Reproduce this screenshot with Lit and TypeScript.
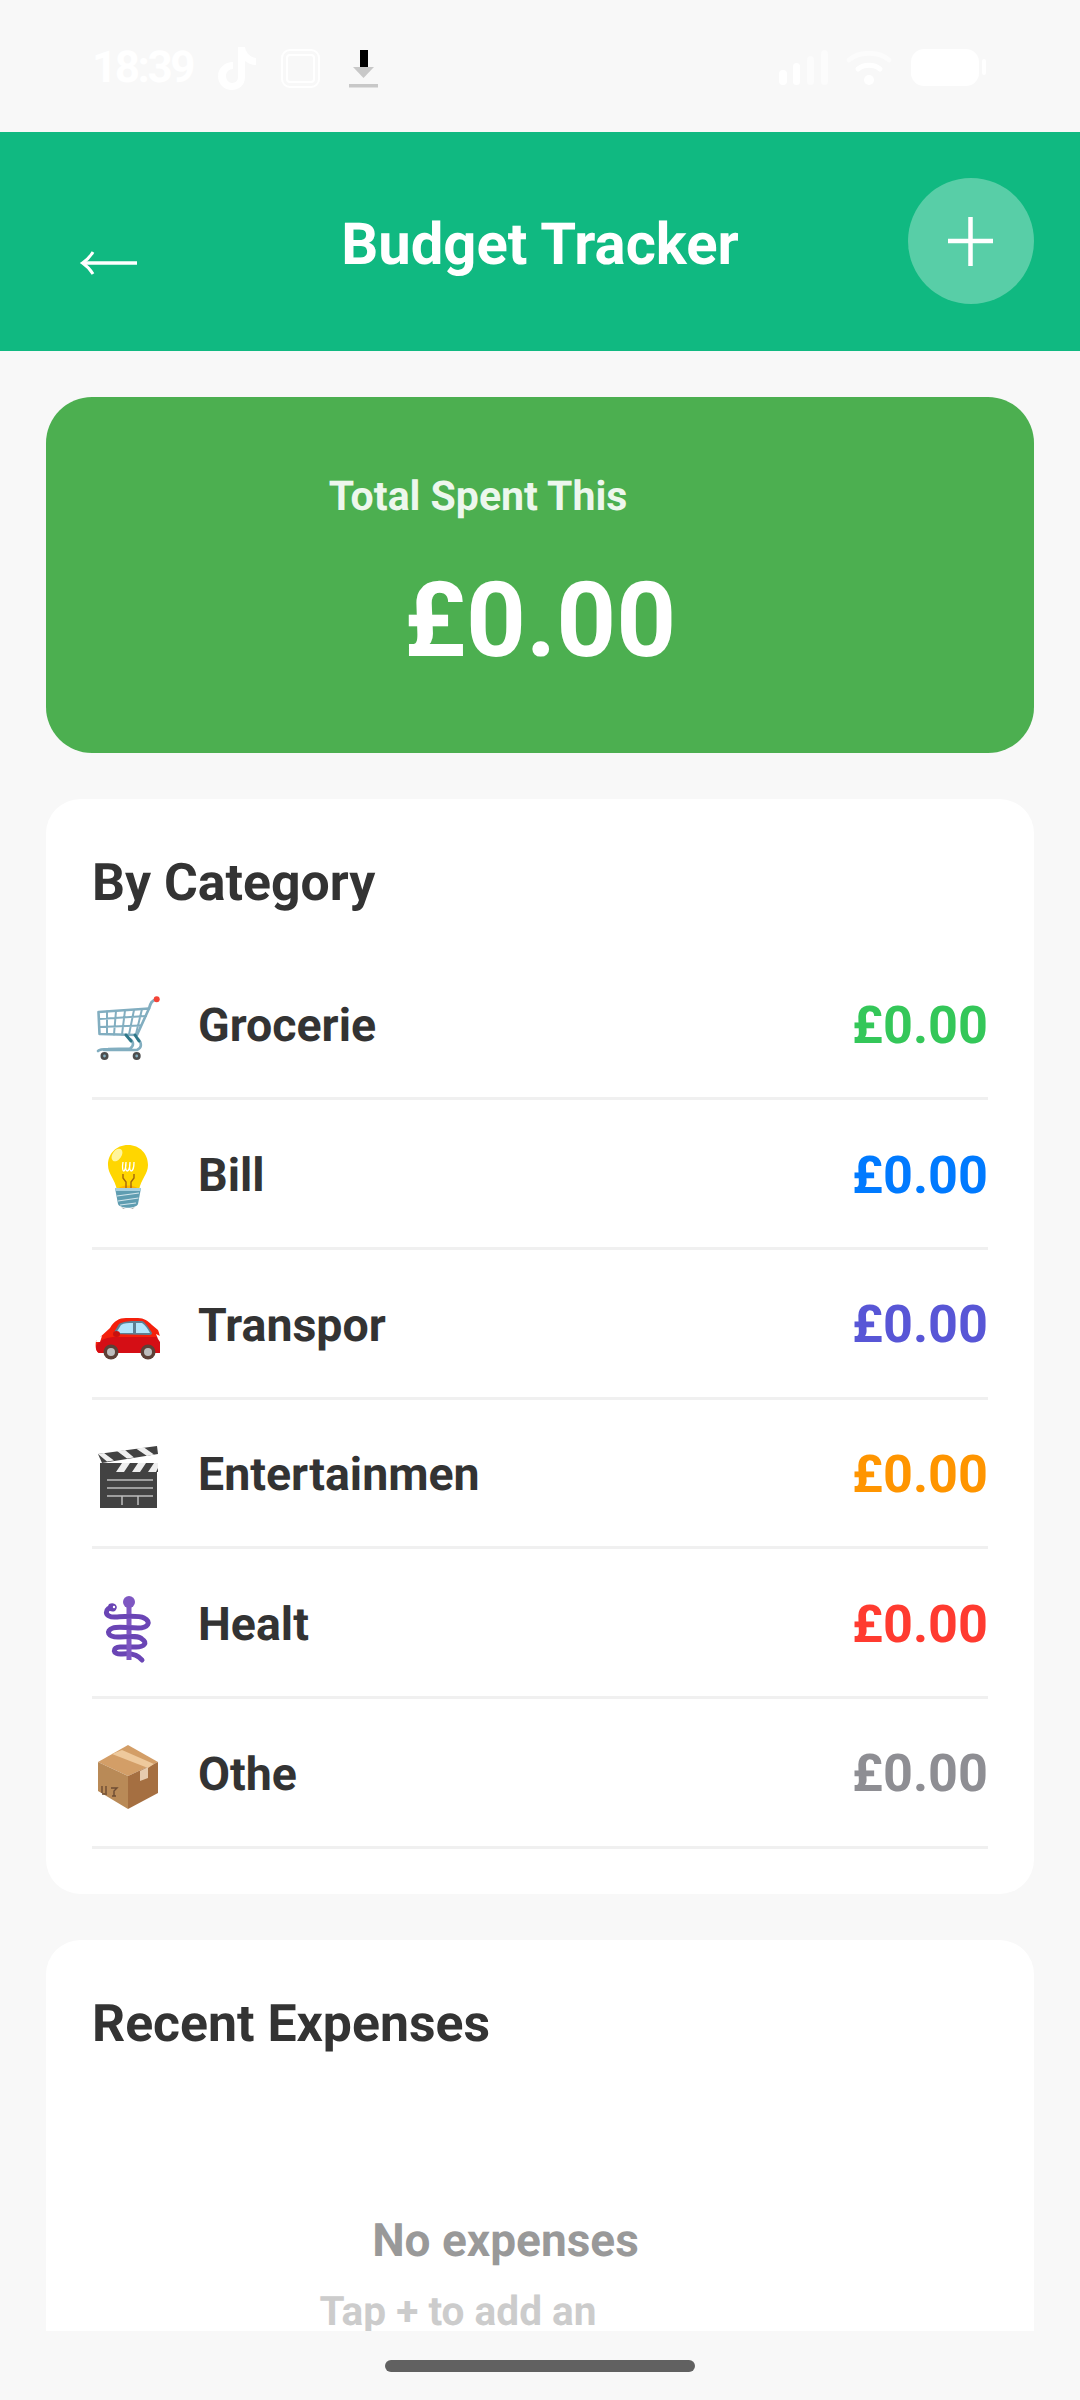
import { LitElement, html, css, svg } from "lit";
import { customElement } from "lit/decorators.js";

const cart = svg`
  <g fill="none" stroke="#82aec0" stroke-width="2" stroke-linejoin="round" stroke-linecap="round">
    <path d="M6.5 24 L57 20.5 L45 47 L7.5 46 Z" stroke-width="2.6"/>
    <path d="M15 23.5 L15 46 M24 23 L22 46.5 M33 22.5 L30 46.5 M42 22 L37 46.5 M50 21 L44 46 M7 31 L54 28 M7 39 L49 37.5"/>
    <path d="M57 20.5 C58.5 15 60 12 64.5 11.3" stroke-width="2.8"/>
    <path d="M6 63 C8 61 12 61 16 61 L38 60.5 C42 58 42 54 38 51 M46 51 C50 55 50 60 45 62 L38 62 L12 62" stroke-width="2.6"/>
    <path d="M34 47 L39 53 M43 47 L47 53" stroke="#2f7889" stroke-width="3"/>
  </g>
  <circle cx="64.7" cy="11.3" r="3" fill="#f44336"/>
  <circle cx="12.5" cy="68" r="4" fill="#4d4d4d"/><circle cx="12.5" cy="68" r="1.4" fill="#82aec0"/>
  <circle cx="44.7" cy="68" r="4" fill="#4d4d4d"/><circle cx="44.7" cy="68" r="1.4" fill="#82aec0"/>
`;

const bulb = svg`
  <path d="M36 7 C24 7 16 16 16 27 C16 36 23 41 25 52 L47 52 C49 41 56 36 56 27 C56 16 48 7 36 7 Z" fill="#ffd600"/>
  <ellipse cx="25" cy="17" rx="4.5" ry="7" fill="#fff59d" transform="rotate(35 25 17)"/>
  <path d="M25 52 C28 46 44 46 47 52 Z" fill="#ffb300"/>
  <path d="M31 36 L31 40 L34 44 L34 51 M42 36 L42 40 L39 44 L39 51" fill="none" stroke="#a1660d" stroke-width="1.4"/>
  <path d="M31 24 C29 36 34 36 34 24 C32 36 38 36 38 24 C36 36 42 36 42 24" fill="none" stroke="#fff" stroke-width="1.3"/>
  <path d="M23 50 L49 50 L46 66 C44 71 28 71 26 66 Z" fill="#5f9db1"/>
  <path d="M23 50 L49 50 L48.5 53 L23.5 53 Z" fill="#a8cfdd"/>
  <path d="M25 58 L47 55 M26 63 L46.5 60 M28 67 L44 65" stroke="#d3e6ec" stroke-width="1.2"/>
  <path d="M29 69 C32 71 40 71 43 69 L41 70.5 L31 70.5 Z" fill="#4d4d4d"/>
`;

const car = svg`
  <path d="M5 53 L18 41 C22 34 27 31 34 31 L46 31 C52 31 56 34 60 38 L66 43 C67 46 68 48 68 52 L68 66 L7 66 C4 65 3 60 4 54 Z" fill="#f4200c"/>
  <path d="M4 59 C8 52 16 50 24 50 L68 50 L68 66 L7 66 C5 65 4 63 4 59 Z" fill="#d50e15"/>
  <path d="M21 47 L27 37 C30 35 36 34 42 34 L50 34 C53 35 57 41 60 46 C60 48 58 48 56 48 Z" fill="#5d7f93"/>
  <path d="M24 46 L29 38 C32 36 36 36 41 36 L41 46 Z" fill="#b3e5fc"/>
  <path d="M44 36 L50 36 C53 38 56 42 58 46 L44 46 Z" fill="#b3e5fc"/>
  <ellipse cx="24.5" cy="47" rx="3.5" ry="3" fill="#c8100e"/>
  <path d="M5 51 L10 49 L8 55 L4 55 Z" fill="#fff"/>
  <path d="M64 47 L68 49 L68 55 L66 52 Z" fill="#fff"/>
  <circle cx="19" cy="65" r="7.5" fill="#5d4037"/><circle cx="19" cy="65" r="4" fill="#bdbdbd"/>
  <circle cx="56" cy="65" r="7.5" fill="#5d4037"/><circle cx="56" cy="65" r="4" fill="#bdbdbd"/>
`;

const clapper = svg`
  <rect x="8" y="35" width="57" height="36" fill="#424242"/>
  <rect x="8" y="26" width="58" height="9" fill="#424242"/>
  <path d="M24 35 L30 26 L38 26 L32 35 Z M40 35 L46 26 L54 26 L48 35 Z M56 35 L62 26 L66 26 L66 31 L64 35 Z" fill="#eeeeee"/>
  <path d="M6 17 L65 9 L66 17 L10 26 Z" fill="#424242"/>
  <path d="M6 17 L12 16 L22 23.5 L15 24.5 Z M25 14 L33 13 L42 20.5 L35 21.5 Z M44 11.5 L52 10.5 L62 17.5 L55 19 Z" fill="#eeeeee"/>
  <path d="M15 43 H61 M15 51 H61 M15 59 H61 M30 59 V68 M46 59 V68" stroke="#bdbdbd" stroke-width="1.5" fill="none"/>
`;

const caduceus = svg`
  <path d="M22 20 C12 20 11 31 24 30 C32 29.5 46 28 52 31 C60 35 56 41 46 41 C36 41 26 39 21 41 C13 44 16 50 26 50 C34 50 46 48 50 52 C56 56 52 60 44 60 L28 60 C20 60 20 68 30 67 C38 66 46 68 50 73" fill="none" stroke="#6a45b5" stroke-width="5" stroke-linecap="round"/>
  <rect x="34.5" y="15" width="5" height="58" fill="#7e57c2"/>
  <circle cx="37" cy="15" r="6" fill="#7e57c2"/>
  <path d="M17 17 C23 14 27 20 23 24 C18 26 14 22 17 17 Z" fill="#6a45b5"/>
  <circle cx="22" cy="20" r="1.2" fill="#fff"/>
  <path d="M32 30 C36 29 40 29 44 29 M30 40 C34 40 38 41 42 41 M32 50 C36 50 40 49 44 50" fill="none" stroke="#6a45b5" stroke-width="4"/>
`;

const box = svg`
  <path d="M36 9 L66 26 L36 40 L6 26 Z" fill="#d39e67"/>
  <path d="M6 26 L36 40 L36 73 L6 55 Z" fill="#b98a57"/>
  <path d="M66 26 L36 40 L36 73 L66 57 Z" fill="#a56f41"/>
  <path d="M20 18 L30 14 L62 28 L56 32 Z" fill="#eec99c"/>
  <path d="M48 35 L56 31 L56 42 L48 45 Z" fill="#e6cbae"/>
  <path d="M10 50 V57 M14 50 V57 M10 58 H15 M19 52 H25 L22 55 V60 M20 60 H24" stroke="#6d4c33" stroke-width="1.4" fill="none"/>
`;

const categories = [
  { name: "Grocerie", color: "#34c759", icon: cart },
  { name: "Bill", color: "#007aff", icon: bulb },
  { name: "Transpor", color: "#5856d6", icon: car },
  { name: "Entertainmen", color: "#ff9500", icon: clapper },
  { name: "Healt", color: "#ff3b30", icon: caduceus },
  { name: "Othe", color: "#8e8e93", icon: box },
];

@customElement("app-root")
export class AppRoot extends LitElement {
  static styles = css`
    :host {
      display: flex;
      flex-direction: column;
      width: 1080px;
      height: 2400px;
      overflow: hidden;
      background: #f8f8f8;
      font-family: Roboto, "Liberation Sans", sans-serif;
      text-rendering: geometricPrecision;
      color: #333;
    }
    .status {
      flex: none;
      height: 132px;
      box-sizing: border-box;
      padding: 47px 94px 0 92px;
      display: flex;
      align-items: flex-start;
    }
    .time {
      font-size: 44px;
      font-weight: 700;
      line-height: 38px;
      letter-spacing: -2.5px;
      color: #fff;
      width: 126px;
      margin-top: 1px;
    }
    .status svg {
      display: block;
      flex: none;
      overflow: visible;
    }
    .tiktok {
      margin-right: 25px;
    }
    .square {
      margin: 2px 29px 0 0;
    }
    .download {
      margin-top: 3px;
    }
    .system {
      margin-top: 2px;
    }
    .spacer {
      flex: 1;
    }
    .header {
      flex: none;
      height: 219px;
      background: #10b981;
      box-sizing: border-box;
      padding: 0 46px;
      display: grid;
      grid-template-columns: 126px 1fr 126px;
      align-items: center;
    }
    .header svg {
      display: block;
    }
    .title {
      font-size: 58px;
      font-weight: 700;
      color: #fff;
      text-align: center;
      padding-top: 6px;
    }
    .add {
      width: 126px;
      height: 126px;
      margin-top: -1px;
      border-radius: 50%;
      background: rgba(255, 255, 255, 0.3);
    }
    .content {
      flex: 1;
      min-height: 0;
      overflow: hidden;
      padding: 46px 46px 0;
      display: flex;
      flex-direction: column;
      gap: 46px;
    }
    .summary {
      flex: none;
      height: 356px;
      border-radius: 46px;
      background: #4caf50;
      color: #fff;
      box-sizing: border-box;
      padding-top: 76px;
      display: flex;
      flex-direction: column;
      align-items: center;
    }
    .summary-label {
      font-size: 41px;
      font-weight: 700;
      opacity: 0.9;
      padding-right: 124px;
    }
    .summary-amount {
      font-size: 104.5px;
      font-weight: 700;
      margin-top: 38px;
    }
    .card {
      flex: none;
      background: #fff;
      border-radius: 34.5px;
      box-sizing: border-box;
      padding: 46px 46px 45.5px;
    }
    .card-title {
      font-size: 51.75px;
      font-weight: 700;
      padding-top: 7px;
      margin-bottom: 37.5px;
    }
    .row {
      height: 149.7px;
      box-sizing: border-box;
      display: flex;
      align-items: center;
      border-bottom: 3px solid #f0f0f0;
    }
    .row svg {
      display: block;
      flex: none;
      width: 72px;
      height: 72px;
      overflow: visible;
      margin-right: 34px;
    }
    .row-name {
      flex: 1;
      font-size: 46.5px;
      font-weight: 700;
      padding-top: 5px;
    }
    .row-amount {
      font-size: 52.2px;
      font-weight: 700;
      padding-top: 3px;
    }
    .empty {
      display: flex;
      flex-direction: column;
      align-items: center;
      margin-top: 160px;
      padding-bottom: 92px;
    }
    .empty-title {
      font-size: 46px;
      font-weight: 700;
      color: #999;
      padding-right: 69px;
    }
    .empty-sub {
      font-size: 40.6px;
      font-weight: 700;
      color: #ccc;
      padding-right: 164px;
      margin-top: 19px;
    }
    .nav {
      flex: none;
      height: 69px;
      background: #f8f8f8;
      display: flex;
      justify-content: center;
      padding-top: 29px;
      box-sizing: border-box;
    }
    .pill {
      width: 310px;
      height: 12px;
      border-radius: 6px;
      background: #616161;
    }
  `;

  render() {
    return html`
      <div class="status">
        <span class="time">18:39</span>
        <svg class="tiktok" width="38" height="43" viewBox="0 0 38 43">
          <path d="M20 0 L27 0 C28 6 32 10 38 11 L38 18 C33 18 30 16 27 14 L27 30 C27 38 21 43 14 43 C6 43 0 37 0 29 C0 21 7 15 15 15 L15 22 C11 22 8 25 8 29 C8 33 11 36 14 36 C18 36 20 33 20 30 Z" fill="#fff"/>
        </svg>
        <svg class="square" width="39" height="39" viewBox="0 0 39 39">
          <rect x="1" y="1" width="37" height="37" rx="8" fill="none" stroke="#fff" stroke-width="2"/>
          <rect x="6" y="6" width="27" height="27" rx="3" fill="none" stroke="#fff" stroke-width="2"/>
        </svg>
        <svg class="download" width="29" height="38" viewBox="0 0 29 38">
          <rect x="11" y="0" width="8" height="17" fill="#000"/>
          <path d="M4 17 H25 L14.5 28 Z" fill="#c8c8c8"/>
          <rect x="0" y="34" width="29" height="3.5" fill="#c8c8c8"/>
        </svg>
        <div class="spacer"></div>
        <svg class="system" width="207" height="38" viewBox="0 0 207 38">
          <rect x="0" y="21" width="8" height="15" rx="4" fill="#fff"/>
          <rect x="14" y="14" width="7" height="22" rx="3.5" fill="#fff"/>
          <rect x="28" y="7" width="7" height="29" rx="3.5" fill="#fff" opacity="0.5"/>
          <rect x="42" y="1" width="7" height="35" rx="3.5" fill="#fff" opacity="0.5"/>
          <path d="M70 11 C80 2 100 2 110 11" fill="none" stroke="#fff" stroke-width="5" stroke-linecap="round" opacity="0.5"/>
          <path d="M79 20 C85 15 95 15 101 20" fill="none" stroke="#fff" stroke-width="5" stroke-linecap="round"/>
          <circle cx="90" cy="31" r="5" fill="#fff"/>
          <rect x="132" y="0" width="68" height="37" rx="13" fill="#fff"/>
          <rect x="203" y="10" width="4" height="16" rx="2" fill="#fff"/>
        </svg>
      </div>

      <div class="header">
        <svg width="126" height="126" viewBox="0 0 126 126">
          <path d="M37 84 H91" stroke="#fff" stroke-width="3.5"/>
          <path d="M47 73 C44 78 41 81 36.5 84 C41 87 44 90 47 95" fill="none" stroke="#fff" stroke-width="3"/>
        </svg>
        <div class="title">Budget Tracker</div>
        <div class="add">
          <svg width="126" height="126" viewBox="0 0 126 126">
            <path d="M62.5 39 V88 M40 63 H85" stroke="#fff" stroke-width="4.5"/>
          </svg>
        </div>
      </div>

      <div class="content">
        <div class="summary">
          <div class="summary-label">Total Spent This</div>
          <div class="summary-amount">£0.00</div>
        </div>

        <div class="card">
          <div class="card-title">By Category</div>
          ${categories.map(
            (c) => html`
              <div class="row">
                <svg viewBox="0 0 72 72">${c.icon}</svg>
                <span class="row-name">${c.name}</span>
                <span class="row-amount" style="color:${c.color}">£0.00</span>
              </div>
            `
          )}
        </div>

        <div class="card">
          <div class="card-title">Recent Expenses</div>
          <div class="empty">
            <div class="empty-title">No expenses</div>
            <div class="empty-sub">Tap + to add an</div>
          </div>
        </div>
      </div>

      <div class="nav"><div class="pill"></div></div>
    `;
  }
}
